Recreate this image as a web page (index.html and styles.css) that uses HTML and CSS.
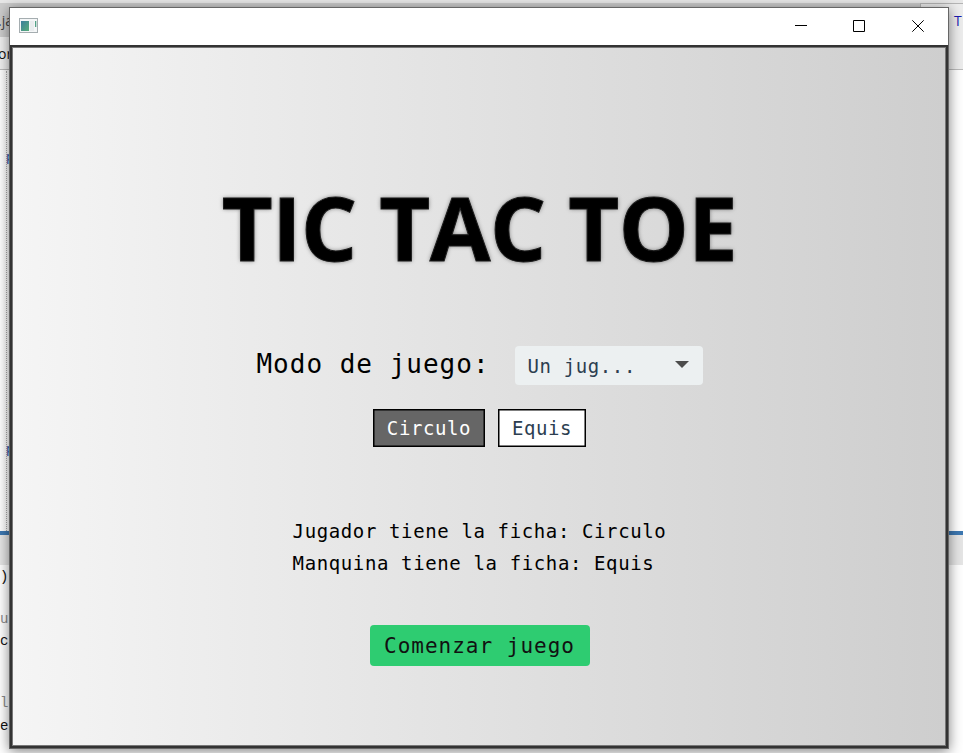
FILE: index.html
```
<!DOCTYPE html>
<html lang="es">
<head>
<meta charset="utf-8">
<title>Tic Tac Toe</title>
<link rel="stylesheet" href="styles.css">
</head>
<body>
<div class="desktop">
  <div class="topline"></div>
  <div class="tabs"><span class="tab-panel"></span></div>
  <div class="toolbar"><span class="tab-panel"></span></div>
  <div class="editor"></div>
  <div class="divider"></div>
  <div class="panel-head"></div>
  <div class="output"></div>
  <span class="bit ui b1">.ja</span>
  <span class="bit ui b2">or</span>
  <span class="guide"></span>
  <span class="bit link b3">p</span>
  <span class="bit b4">:</span>
  <span class="bit link b5">p</span>
  <span class="bit b6">)</span>
  <span class="bit dim b7">u</span>
  <span class="bit b8">c</span>
  <span class="bit dim b9">l</span>
  <span class="bit b10">e</span>
  <span class="bit ui b11">T</span>
</div>
<div class="window">
  <header class="titlebar">
    <svg class="app-icon" width="19" height="15" viewBox="0 0 19 15">
      <defs><linearGradient id="g" x1="0" y1="0" x2="1" y2="1"><stop offset="0" stop-color="#3c7e9c"/><stop offset="1" stop-color="#58ad79"/></linearGradient></defs>
      <rect x=".5" y=".5" width="18" height="14" fill="#f4f6f7" stroke="#a5adb0"/>
      <rect x="2" y="3" width="8" height="10" fill="url(#g)"/>
      <rect x="11" y="3" width="4" height="10" fill="#e9ecee"/>
      <rect x="16" y="3" width="1.3" height="6" fill="#55a287"/>
    </svg>
    <svg class="controls" width="132" height="14" viewBox="0 0 132 14" fill="none" stroke="#000">
      <path d="M0 6.5h12M58.500 1.500h11v11h-11zM117.300 1.300l11.400 11.400M128.700 1.300l-11.400 11.400"/>
    </svg>
  </header>
  <main class="scene">
    <h1>TIC TAC TOE</h1>
    <div class="mode">
      <span class="mode-label">Modo de juego:</span>
      <div class="combo"><span>Un jug...</span><span class="arrow"></span></div>
    </div>
    <div class="tokens">
      <button class="token selected">Circulo</button>
      <button class="token">Equis</button>
    </div>
    <div class="info">
      <p class="player">Jugador tiene la ficha: Circulo</p>
      <p>Manquina tiene la ficha: Equis</p>
    </div>
    <button class="start">Comenzar juego</button>
  </main>
</div>
</body>
</html>
```
FILE: styles.css
```
* { box-sizing: border-box; }
body {
  margin: 0;
  width: 963px;
  height: 753px;
  overflow: hidden;
  position: relative;
  font-family: "DejaVu Sans Mono", monospace;
}
.desktop { height: 753px; position: relative; overflow: hidden; }
.topline { height: 3px; background: #e8e8e8; }
.tabs, .toolbar { display: flex; justify-content: flex-end; }
.tabs { height: 34px; background: #cdcdcd; }
.toolbar { height: 33px; background: #f0f0f0; border-bottom: 1px solid #bbb; }
.tab-panel { width: 43px; background: #ededed; }
.tabs .tab-panel { border: 1px solid #b5b5b5; border-width: 1px 0 0 1px; }
.editor { height: 461px; background: #fff; }
.divider { height: 4px; background: #3d78b2; }
.panel-head { height: 30px; background: #e6e6e6; }
.output { height: 188px; background: #fff; }
.bit {
  position: absolute;
  font: 14px/16px "Liberation Mono", monospace;
  color: #111;
}
.ui { font-family: "Open Sans", sans-serif; }
.link { color: #2a4fa8; text-decoration: underline; font-size: 13px; }
.dim { color: #8a8a8a; }
.guide { position: absolute; left: 6px; top: 71px; height: 460px; border-left: 1px dotted #aaa; }
.b1 { left: -2px; top: 13px; color: #444; }
.b2 { left: -2px; top: 46px; }
.b3 { left: 6px; top: 150px; }
.b4 { left: 6px; top: 398px; }
.b5 { left: 6px; top: 442px; }
.b6 { left: 0; top: 569px; }
.b7 { left: 0; top: 611px; }
.b8 { left: 0; top: 633px; }
.b9 { left: 0; top: 695px; }
.b10 { left: 0; top: 718px; }
.b11 { left: 954px; top: 13px; color: #1a1ab0; }

.window {
  position: absolute;
  left: 9px;
  top: 7px;
  width: 940px;
  height: 742px;
  border: 1px solid #666;
  background: #fff;
  box-shadow: 0 2px 12px rgba(0, 0, 0, .5);
}
.titlebar {
  height: 37px;
  display: flex;
  justify-content: space-between;
  padding: 10px 21px 0 9px;
}
.controls { margin-top: 1px; }
.scene {
  height: 703px;
  border: 2px solid #333;
  box-shadow: inset 0 0 0 1px #777;
  background: linear-gradient(90deg, #f5f5f5, #cecece);
  display: flex;
  flex-direction: column;
  align-items: center;
  padding: 132px 0 0 1px;
}
h1 {
  margin: 0;
  height: 100px;
  font: 700 88px/96px "Open Sans", sans-serif;
  letter-spacing: -.4px;
  white-space: nowrap;
  -webkit-text-stroke: 1px #1c1c1c;
  color: #000;
  text-shadow: 0 0 4px rgba(0, 0, 0, .5);
}
.mode { display: flex; align-items: center; gap: 25px; height: 39px; margin-top: 67px; }
.mode-label { font-size: 26px; letter-spacing: 1px; line-height: 36px; margin-top: -4px; }
.combo {
  width: 188px;
  height: 39px;
  border-radius: 4px;
  background: #ecf0f1;
  color: #2c3e50;
  font-size: 19px;
  letter-spacing: .6px;
  padding: 0 14px 0 13px;
  display: flex;
  align-items: center;
  justify-content: space-between;
}
.arrow { border: 7px solid transparent; border-top-color: #4c4c4c; border-bottom: 0; margin-top: -3px; }
.tokens { display: flex; gap: 13px; margin-top: 24px; }
button { font-family: inherit; margin: 0; padding: 0; border: 0; }
.token {
  width: 88px;
  height: 38px;
  border: 1px solid #000;
  background: #fff;
  color: #2c3e50;
  font-size: 19px;
  letter-spacing: .6px;
  box-shadow: inset 0 0 0 .5px #000;
}
.selected { width: 112px; background: #666; color: #fff; }
.info { margin-top: 68px; font-size: 19px; letter-spacing: .62px; line-height: 32px; }
.info p { margin: 0; }
.start {
  width: 220px;
  height: 41px;
  margin-top: 46px;
  border-radius: 4px;
  background: #2ecc71;
  color: #111;
  font-size: 21px;
  letter-spacing: 1px;
}
```
